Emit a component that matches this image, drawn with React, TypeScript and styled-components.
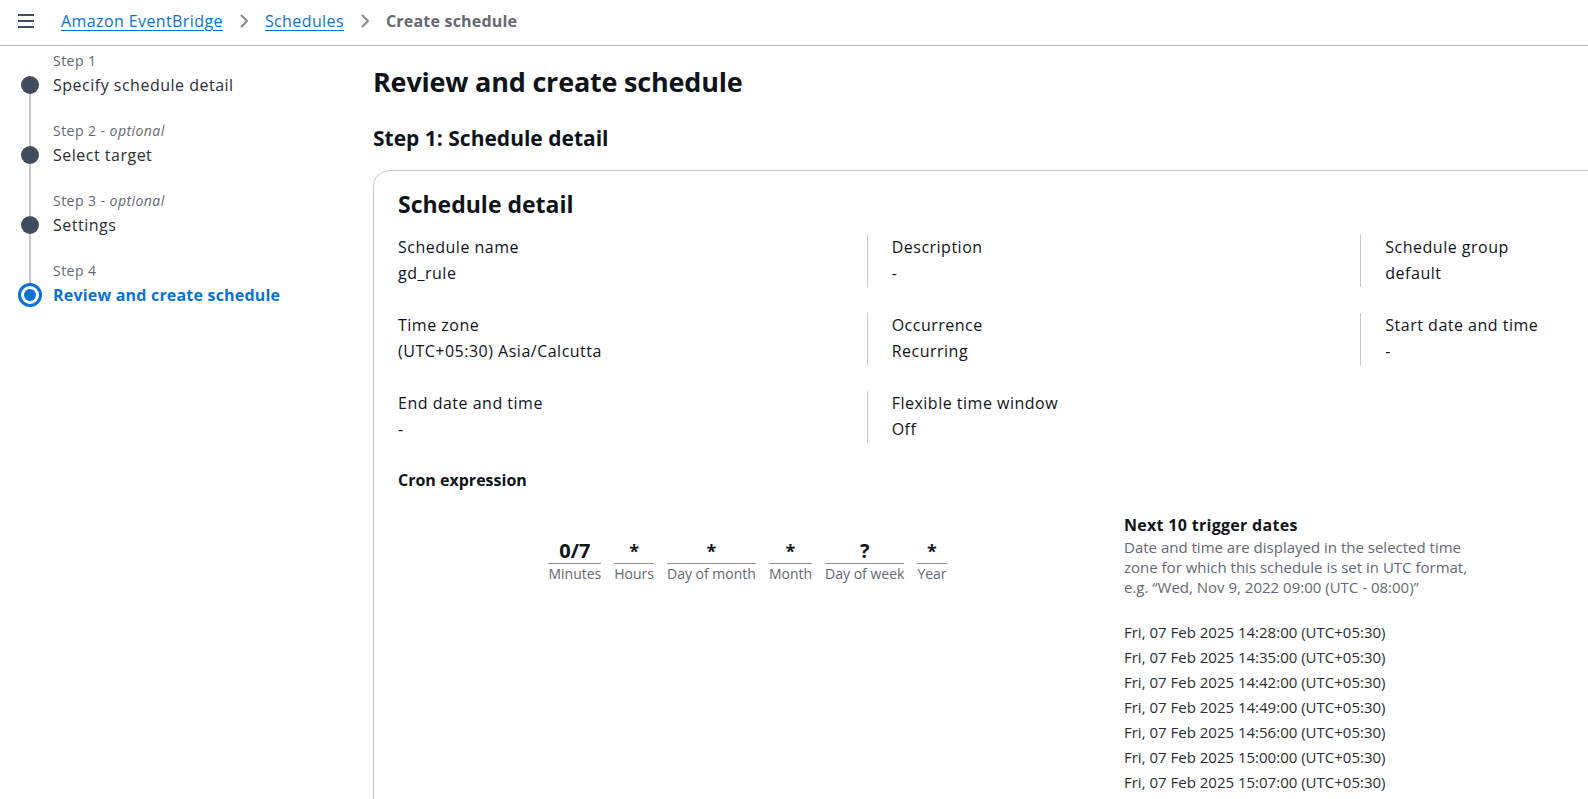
import styled, { createGlobalStyle } from "styled-components";

const GlobalStyle = createGlobalStyle`
  html, body {
    margin: 0;
    padding: 0;
    background: #ffffff;
    overflow: hidden;
  }
  body {
    font-family: "Open Sans", "Noto Sans", sans-serif;
    color: #0f141a;
    -webkit-font-smoothing: antialiased;
  }
  * {
    box-sizing: border-box;
  }
`;

type Step = {
  label: string;
  optional?: boolean;
  title: string;
};

const steps: Step[] = [
  { label: "Step 1", title: "Specify schedule detail" },
  { label: "Step 2", optional: true, title: "Select target" },
  { label: "Step 3", optional: true, title: "Settings" },
  { label: "Step 4", title: "Review and create schedule" },
];

const details = [
  { label: "Schedule name", value: "gd_rule" },
  { label: "Description", value: "-" },
  { label: "Schedule group", value: "default" },
  { label: "Time zone", value: "(UTC+05:30) Asia/Calcutta" },
  { label: "Occurrence", value: "Recurring" },
  { label: "Start date and time", value: "-" },
  { label: "End date and time", value: "-" },
  { label: "Flexible time window", value: "Off" },
];

const cronFields = [
  { value: "0/7", label: "Minutes" },
  { value: "*", label: "Hours" },
  { value: "*", label: "Day of month" },
  { value: "*", label: "Month" },
  { value: "?", label: "Day of week" },
  { value: "*", label: "Year" },
];

const triggerTimes = [
  "14:28:00",
  "14:35:00",
  "14:42:00",
  "14:49:00",
  "14:56:00",
  "15:00:00",
  "15:07:00",
  "15:14:00",
  "15:21:00",
  "15:28:00",
];

const MenuIcon = () => (
  <svg width="18" height="16" viewBox="0 0 18 16" fill="none">
    <path d="M1 2h16M1 8h16M1 14h16" stroke="#414d5c" strokeWidth="2" />
  </svg>
);

const Chevron = () => (
  <svg width="12" height="16" viewBox="0 0 12 16" fill="none">
    <path d="M3 2l6 6-6 6" stroke="#8c8c94" strokeWidth="2.2" strokeLinejoin="round" />
  </svg>
);

const App = () => {
  const lastStep = steps.length - 1;
  return (
    <>
      <GlobalStyle />
      <TopBar>
        <MenuButton aria-label="Open navigation">
          <MenuIcon />
        </MenuButton>
        <Breadcrumbs>
          <Crumb href="#">Amazon EventBridge</Crumb>
          <Separator>
            <Chevron />
          </Separator>
          <Crumb href="#">Schedules</Crumb>
          <Separator>
            <Chevron />
          </Separator>
          <CurrentCrumb>Create schedule</CurrentCrumb>
        </Breadcrumbs>
      </TopBar>
      <Layout>
        <Sidebar>
          {steps.map((step, idx) => (
            <StepItem key={step.label}>
              <Rail>
                <RailLine hidden={idx === 0} $fixed />
                {idx === lastStep ? (
                  <ActiveDot>
                    <span />
                  </ActiveDot>
                ) : (
                  <Dot />
                )}
                <RailLine hidden={idx === lastStep} />
              </Rail>
              <StepText>
                <StepLabel>
                  {step.label}
                  {step.optional && (
                    <>
                      {" - "}
                      <em>optional</em>
                    </>
                  )}
                </StepLabel>
                <StepTitle $active={idx === lastStep}>{step.title}</StepTitle>
              </StepText>
            </StepItem>
          ))}
        </Sidebar>
        <Main>
          <PageTitle>Review and create schedule</PageTitle>
          <SectionTitle>Step 1: Schedule detail</SectionTitle>
          <Container>
            <ContainerTitle>Schedule detail</ContainerTitle>
            <KeyValueGrid>
              {details.map((item) => (
                <KeyValue key={item.label}>
                  <KeyLabel>{item.label}</KeyLabel>
                  <KeyText>{item.value}</KeyText>
                </KeyValue>
              ))}
            </KeyValueGrid>
            <CronTitle>Cron expression</CronTitle>
            <CronGrid>
              <CronColumn>
                <CronFields>
                  {cronFields.map((f) => (
                    <CronField key={f.label}>
                      <CronValue $small={f.value === "*"}>{f.value}</CronValue>
                      <CronLabel>{f.label}</CronLabel>
                    </CronField>
                  ))}
                </CronFields>
              </CronColumn>
              <TriggerColumn>
                <TriggerTitle>Next 10 trigger dates</TriggerTitle>
                <TriggerHint>
                  Date and time are displayed in the selected time zone for which this schedule is
                  set in UTC format, e.g. “Wed, Nov 9, 2022 09:00 (UTC - 08:00)”
                </TriggerHint>
                <TriggerList>
                  {triggerTimes.map((t) => (
                    <li key={t}>Fri, 07 Feb 2025 {t} (UTC+05:30)</li>
                  ))}
                </TriggerList>
              </TriggerColumn>
            </CronGrid>
          </Container>
        </Main>
      </Layout>
    </>
  );
};

const TopBar = styled.header`
  display: flex;
  align-items: center;
  height: 46px;
  padding: 0 0 4px 17px;
  border-bottom: 1px solid #b4b4bb;
`;
const MenuButton = styled.button`
  display: flex;
  align-items: center;
  padding: 0;
  margin: 0 26px 0 0;
  border: none;
  background: none;
  cursor: pointer;
`;
const Breadcrumbs = styled.nav`
  display: flex;
  align-items: center;
  font-size: 16px;
  line-height: 24px;
  letter-spacing: 0.4px;
`;
const Crumb = styled.a`
  color: #0972d3;
  text-decoration: underline;
  text-underline-offset: 3px;
`;
const Separator = styled.span`
  display: flex;
  align-items: center;
  margin: 0 15px;
`;
const CurrentCrumb = styled.span`
  color: #656871;
  font-weight: 700;
  letter-spacing: 0.2px;
`;

const Layout = styled.div`
  display: flex;
  align-items: flex-start;
  overflow: hidden;
`;
const Sidebar = styled.ol`
  flex: 0 0 373px;
  margin: 0;
  padding: 5px 0 0 18px;
  list-style: none;
`;
const StepItem = styled.li`
  display: flex;
  gap: 11px;
`;
const Rail = styled.div`
  display: flex;
  flex-direction: column;
  align-items: center;
  width: 24px;
`;
const RailLine = styled.div<{ $fixed?: boolean }>`
  width: 2px;
  background: #c6c6cd;
  visibility: ${(p) => (p.hidden ? "hidden" : "visible")};
  display: block;
  ${(p) => (p.$fixed ? "height: 25px; flex: none;" : "flex: 1;")}
`;
const Dot = styled.div`
  width: 18px;
  height: 18px;
  border-radius: 50%;
  background: #414d5c;
  flex: none;
`;
const ActiveDot = styled.div`
  width: 24px;
  height: 24px;
  margin-top: -3px;
  border-radius: 50%;
  border: 3px solid #0972d3;
  display: flex;
  align-items: center;
  justify-content: center;
  flex: none;
  span {
    width: 12px;
    height: 12px;
    border-radius: 50%;
    background: #0972d3;
  }
`;
const StepText = styled.div`
  display: flex;
  flex-direction: column;
  padding-bottom: 24px;
`;
const StepLabel = styled.span`
  font-size: 14px;
  line-height: 20px;
  letter-spacing: 0.45px;
  color: #656871;
  margin-bottom: 2px;
  em {
    font-style: italic;
  }
`;
const StepTitle = styled.span<{ $active?: boolean }>`
  font-size: 16px;
  line-height: 24px;
  letter-spacing: ${(p) => (p.$active ? "0.2px" : "0.5px")};
  color: ${(p) => (p.$active ? "#0972d3" : "#2a2e33")};
  font-weight: ${(p) => (p.$active ? 700 : 400)};
`;

const Main = styled.main`
  flex: 1;
  min-width: 0;
  padding-top: 18px;
`;
const PageTitle = styled.h1`
  margin: 0;
  font-size: 27px;
  line-height: 36px;
  letter-spacing: -0.2px;
  font-weight: 700;
`;
const SectionTitle = styled.h2`
  margin: 24px 0 18px;
  font-size: 21px;
  line-height: 28px;
  font-weight: 700;
`;
const Container = styled.section`
  width: 1506px;
  padding: 18px 24px 40px;
  border: 1px solid #c6c6cd;
  border-radius: 16px;
`;
const ContainerTitle = styled.h3`
  margin: 0 0 16px;
  font-size: 23px;
  line-height: 30px;
  font-weight: 700;
`;
const KeyValueGrid = styled.div`
  display: grid;
  grid-template-columns: repeat(3, 1fr);
  row-gap: 26px;
  margin-left: -25px;
`;
const KeyValue = styled.div`
  padding: 0 0 2px 24px;
  border-left: 1px solid #c6c6cd;
  font-size: 16px;
  line-height: 24px;
  letter-spacing: 0.5px;
  &:nth-child(3n + 1) {
    border-left-color: transparent;
  }
`;
const KeyLabel = styled.div`
  margin-bottom: 2px;
`;
const KeyText = styled.div``;
const CronTitle = styled.h4`
  margin: 25px 0 21px;
  font-size: 16px;
  line-height: 24px;
  font-weight: 700;
`;
const CronGrid = styled.div`
  display: grid;
  grid-template-columns: 726px 1fr;
`;
const CronColumn = styled.div`
  display: flex;
  justify-content: center;
  align-items: flex-start;
  padding: 26px 27px 0 0;
`;
const CronFields = styled.div`
  display: flex;
  gap: 13px;
`;
const CronField = styled.div`
  display: flex;
  flex-direction: column;
  align-items: stretch;
  text-align: center;
`;
const CronValue = styled.div<{ $small?: boolean }>`
  font-size: ${(p) => (p.$small ? "18px" : "20px")};
  line-height: 24px;
  font-weight: 700;
  border-bottom: 1px solid #8c8c94;
`;
const CronLabel = styled.div`
  font-size: 14px;
  line-height: 20px;
  color: #656871;
  white-space: nowrap;
`;
const TriggerColumn = styled.div`
  display: flex;
  flex-direction: column;
`;
const TriggerTitle = styled.div`
  font-size: 16px;
  line-height: 24px;
  letter-spacing: 0.3px;
  font-weight: 700;
`;
const TriggerHint = styled.p`
  margin: 0;
  max-width: 350px;
  font-size: 15px;
  line-height: 20px;
  color: #656871;
`;
const TriggerList = styled.ul`
  margin: 23px 0 0;
  padding: 0;
  list-style: none;
  display: flex;
  flex-direction: column;
  gap: 1px;
  font-size: 15px;
  line-height: 24px;
  color: #2a2e33;
`;

export default App;
